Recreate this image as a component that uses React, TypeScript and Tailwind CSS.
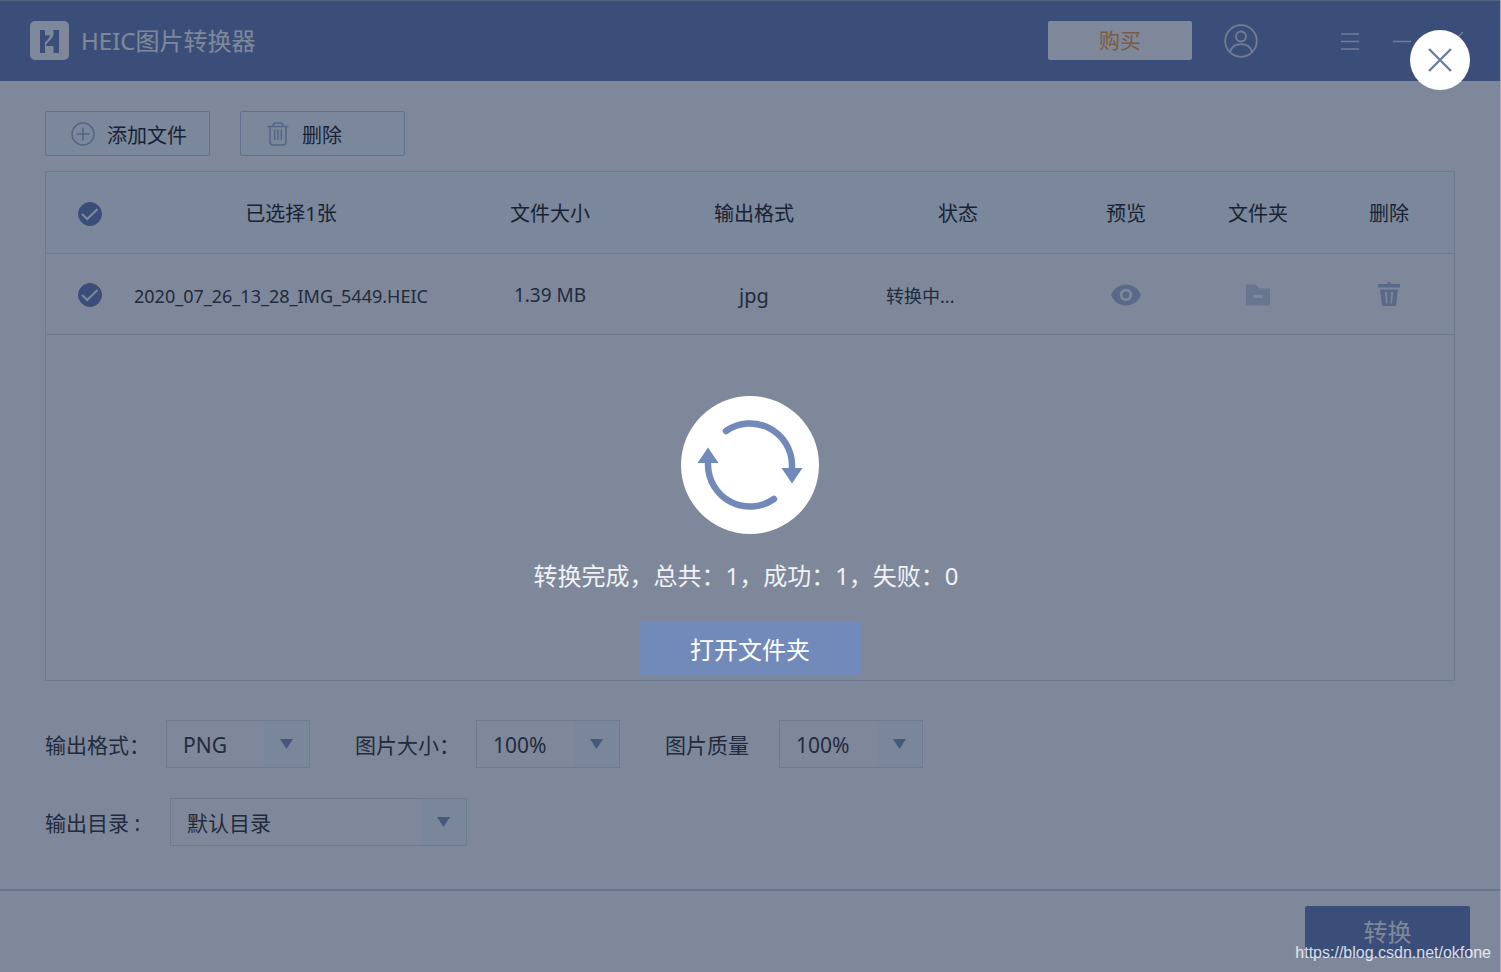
import { useState } from "react";
import type { ReactNode } from "react";

function CircleCheckbox({ id, label }: { id: string; label: string }) {
  const [checked, setChecked] = useState(true);
  return (
    <label htmlFor={id} className="inline-grid size-6 cursor-pointer align-middle">
      <input
        id={id}
        type="checkbox"
        aria-label={label}
        checked={checked}
        onChange={(e) => setChecked(e.target.checked)}
        className="col-start-1 row-start-1 size-6 appearance-none rounded-full border border-[#748bbd] bg-white checked:bg-[#748bbd]"
      />
      {checked && (
        <svg viewBox="0 0 24 24" className="pointer-events-none col-start-1 row-start-1 size-6" fill="none" stroke="#fff" strokeWidth="2">
          <path d="M4 12l5.200 5L19.500 7" />
        </svg>
      )}
    </label>
  );
}

function SelectBox({ id, options, width }: { id: string; options: string[]; width: string }) {
  return (
    <div className={`grid h-12 grid-cols-[1fr_45px] border border-[#dae3e9] bg-white ${width}`}>
      <span className="pointer-events-none col-start-2 row-start-1 flex items-center justify-center bg-[#f4fbff]">
        <svg viewBox="0 0 13 10" className="h-2.5 w-[13px]" fill="#8b9fc5">
          <path d="M0 0h13L6.500 10z" />
        </svg>
      </span>
      <select
        id={id}
        className="col-span-2 col-start-1 row-start-1 h-full w-full appearance-none bg-transparent pt-1 pl-4 text-[21px] text-[#444] outline-none"
      >
        {options.map((o) => (
          <option key={o}>{o}</option>
        ))}
      </select>
    </div>
  );
}

function ToolButton({ icon, children }: { icon: ReactNode; children: ReactNode }) {
  return (
    <button className="flex h-[45px] w-[165px] items-center gap-3 rounded-xs border border-[#c2cfe6] bg-[#f6fdff] pl-[25px] text-xl text-[#333]">
      {icon}
      <span className="pt-1">{children}</span>
    </button>
  );
}

function Titlebar() {
  return (
    <header className="flex h-[81px] shrink-0 items-center border-t border-[#a3b1d0] bg-[#748bbd] pr-9 pb-px pl-[30px] text-white">
      <svg viewBox="0 0 39 39" className="size-[39px]">
        <rect width="39" height="39" rx="5" fill="#fff" />
        <path d="M10 9h5v5.500l5-.5-1 3-4 4.500V32h-5zM23.500 9H29v23h-5.500v-7H16l.5-2 5-5.500 2-3.500z" fill="#748bbd" />
      </svg>
      <h1 className="ml-3 text-2xl">HEIC图片转换器</h1>
      <button className="ml-auto h-[39px] w-36 rounded-xs bg-white text-[21px] text-[#f5a44c]">购买</button>
      <button aria-label="账户" className="ml-8">
        <svg viewBox="0 0 34 34" className="size-[34px]" fill="none" stroke="#e4e9f2" strokeWidth="1.8">
          <circle cx="17" cy="17" r="15.800" />
          <circle cx="17" cy="12.500" r="5" />
          <path d="M6 28c1.500-5 5.500-7.800 11-7.800S26.500 23 28 28" />
        </svg>
      </button>
      <button aria-label="菜单" className="ml-[82px]">
        <svg viewBox="0 0 20 20" className="size-5" stroke="#e4e9f2" strokeWidth="1.500">
          <path d="M1 3h18M1 10.500h18M1 18h18" />
        </svg>
      </button>
      <button aria-label="最小化" className="ml-8">
        <svg viewBox="0 0 20 20" className="size-5" stroke="#e4e9f2" strokeWidth="1.500">
          <path d="M1 10.500h18" />
        </svg>
      </button>
      <button aria-label="关闭" className="ml-8">
        <svg viewBox="0 0 20 20" className="size-5" stroke="#e4e9f2" strokeWidth="1.500">
          <path d="M1 1l18 18M19 1L1 19" />
        </svg>
      </button>
    </header>
  );
}

function FileTable() {
  return (
    <div className="mt-[15px] flex-1 border border-[#d9e2e8] bg-white">
      <table className="w-full table-fixed border-collapse text-center text-xl text-[#333]">
        <colgroup>
          <col className="w-[88px]" />
          <col />
          <col className="w-[204px]" />
          <col className="w-[204px]" />
          <col className="w-[204px]" />
          <col className="w-[132px]" />
          <col className="w-[132px]" />
          <col className="w-[130px]" />
        </colgroup>
        <thead>
          <tr className="h-[81px] border-b border-[#d9e2e8] bg-[#f6fdff]">
            <th className="font-normal"><CircleCheckbox id="all" label="全选" /></th>
            <th className="pt-1 font-normal">已选择1张</th>
            <th className="pt-1 font-normal">文件大小</th>
            <th className="pt-1 font-normal">输出格式</th>
            <th className="pt-1 font-normal">状态</th>
            <th className="pt-1 font-normal">预览</th>
            <th className="pt-1 font-normal">文件夹</th>
            <th className="pt-1 font-normal">删除</th>
          </tr>
        </thead>
        <tbody>
          <tr className="h-[81px] border-b border-[#d9e2e8] text-[19px] text-[#444]">
            <td><CircleCheckbox id="row1" label="选择 2020_07_26_13_28_IMG_5449.HEIC" /></td>
            <td className="pt-1 text-left text-lg">2020_07_26_13_28_IMG_5449.HEIC</td>
            <td className="pt-1">1.39 MB</td>
            <td className="pt-1 text-xl">jpg</td>
            <td className="pt-1 pl-[30px] text-left text-lg">转换中...</td>
            <td>
              <button aria-label="预览" className="align-middle">
                <svg viewBox="0 0 30 24" className="h-6 w-[30px]" fill="#b4c0de">
                  <path fillRule="evenodd" d="M0 12C3 5 8.500 1.500 15 1.500S27 5 30 12c-3 7-8.500 10.500-15 10.500S3 19 0 12zM15 5.800a6.200 6.200 0 100 12.400 6.200 6.200 0 000-12.400z" />
                  <circle cx="15" cy="12" r="3.500" />
                </svg>
              </button>
            </td>
            <td>
              <button aria-label="文件夹" className="align-middle">
                <svg viewBox="0 0 26 24" className="h-6 w-[26px]" fill="#d2dbea">
                  <path fillRule="evenodd" d="M1 1.500h9.500l4 4H25V22.500H1zM8.500 12v3h9v-3z" />
                </svg>
              </button>
            </td>
            <td>
              <button aria-label="删除" className="align-middle">
                <svg viewBox="0 0 24 26" className="h-[26px] w-6" fill="#b4c0de">
                  <path fillRule="evenodd" d="M10.500 1h3v2H23v3.500H1V3h9.500zM3 8.500h18L19 25H5zM8 11l.9 11.500h1.600L10 11zM14 11l-.5 11.500h1.600L16 11z" />
                </svg>
              </button>
            </td>
          </tr>
        </tbody>
      </table>
    </div>
  );
}

function ResultDialog({ onClose }: { onClose: () => void }) {
  return (
    <div role="dialog" aria-label="转换完成" className="absolute inset-0 flex flex-col items-center justify-center bg-[#001135]/50 pt-[99px] text-white">
      <button
        aria-label="关闭提示"
        onClick={onClose}
        className="absolute top-[30px] right-[30px] flex size-[60px] items-center justify-center rounded-full bg-white"
      >
        <svg viewBox="0 0 24 24" className="size-6" stroke="#6a7fa9" strokeWidth="2.400">
          <path d="M1 1l22 22M23 1L1 23" />
        </svg>
      </button>
      <svg viewBox="0 0 138 138" className="size-[138px]">
        <circle cx="69" cy="69" r="69" fill="#fff" />
        <g fill="none" stroke="#728aba" strokeWidth="6.500" strokeLinecap="round">
          <path d="M45 35A42 42 0 0 1 111 69V74" />
          <path d="M93 103A42 42 0 0 1 27 69V65" />
        </g>
        <path d="M100.500 72h21L111 87.500zM37.500 67h-21L27 51.500z" fill="#728aba" />
      </svg>
      <p className="mt-6 pr-2 text-2xl leading-9 text-[#f0f2f6]">转换完成，总共：1，成功：1，失败：0</p>
      <button className="mt-[27px] h-[54px] w-[222px] rounded-sm bg-[#728aba] pt-1 text-2xl">打开文件夹</button>
    </div>
  );
}

export default function App() {
  const [open, setOpen] = useState(true);
  return (
    <div className="relative flex min-h-screen flex-col border-r border-[#a9adb6] bg-white font-['Noto_Sans','Noto_Sans_CJK_SC',sans-serif]">
      <Titlebar />
      <main className="flex flex-1 flex-col px-[45px] pt-[30px] pb-[43px]">
        <div className="flex gap-[30px]">
          <ToolButton
            icon={
              <svg viewBox="0 0 24 24" className="size-6" fill="none" stroke="#a9b6d6" strokeWidth="1.500">
                <circle cx="12" cy="12" r="11" />
                <path d="M5.500 12h13M12 5.500v13" />
              </svg>
            }
          >
            添加文件
          </ToolButton>
          <ToolButton
            icon={
              <svg viewBox="0 0 24 24" className="size-6" fill="none" stroke="#a9b6d6" strokeWidth="1.500">
                <path d="M1.500 4.500h21M7 4.500C7 2 8 1 9.500 1h5C16 1 17 2 17 4.500M4 4.500V20c0 2 1 3 3 3h10c2 0 3-1 3-3V4.500M8.700 7.500V18M12 7.500V18M15.300 7.500V18" />
              </svg>
            }
          >
            删除
          </ToolButton>
        </div>
        <FileTable />
        <div className="mt-[39px] flex items-center gap-[45px] text-[21px] text-[#444]">
          <div className="flex items-center gap-4">
            <label htmlFor="format" className="pt-1">输出格式：</label>
            <SelectBox id="format" options={["PNG", "JPG"]} width="w-36" />
          </div>
          <div className="flex items-center gap-4">
            <label htmlFor="size" className="pt-1">图片大小：</label>
            <SelectBox id="size" options={["100%", "75%", "50%"]} width="w-36" />
          </div>
          <div className="flex items-center gap-[30px]">
            <label htmlFor="quality" className="pt-1">图片质量</label>
            <SelectBox id="quality" options={["100%", "75%", "50%"]} width="w-36" />
          </div>
        </div>
        <div className="mt-[30px] flex items-center gap-[30px] text-[21px] text-[#444]">
          <label htmlFor="dir" className="pt-1">输出目录 :</label>
          <SelectBox id="dir" options={["默认目录"]} width="w-[297px]" />
        </div>
      </main>
      <footer className="flex h-[83px] shrink-0 items-start justify-end border-t-2 border-[#ccd7e9] pt-[15px] pr-[30px]">
        <button className="h-[51px] w-[165px] rounded-xs bg-[#748bbd] text-2xl text-white">转换</button>
      </footer>
      {open && <ResultDialog onClose={() => setOpen(false)} />}
      <a
        href="https://blog.csdn.net/okfone"
        className="absolute right-[9px] bottom-[7px] font-['Liberation_Sans',sans-serif] text-base text-white/80"
      >
        https://blog.csdn.net/okfone
      </a>
    </div>
  );
}
